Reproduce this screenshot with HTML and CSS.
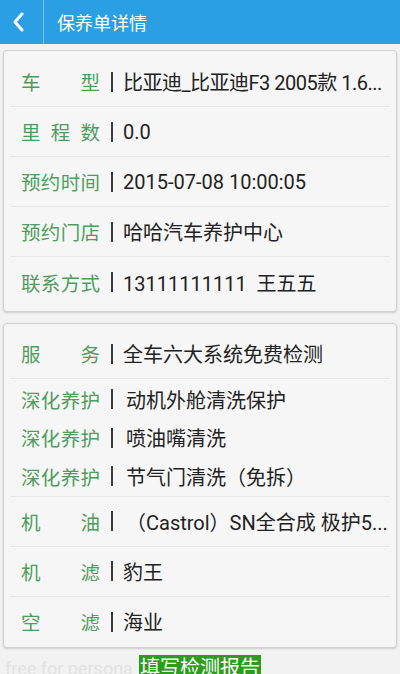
FILE: index.html
```html
<!DOCTYPE html>
<html lang="zh-CN">
<head>
  <meta charset="UTF-8" />
  <meta name="viewport" content="width=device-width, initial-scale=1.0" />
  <title>保养单详情</title>
  <link rel="stylesheet" href="styles.css">
</head>
<body>
  <div class="topbar">
    <div class="back">
      <svg width="14" height="20" viewBox="0 0 14 20"><polyline points="10,2 3,10 10,18" fill="none" stroke="#fff" stroke-width="3" stroke-linecap="round" stroke-linejoin="round"/></svg>
    </div>
    <div class="title">保养单详情</div>
  </div>

  <div class="card card-first">
    <div class="row"><span class="label">车型</span><span class="bar"></span><span class="value tight">比亚迪_比亚迪F3 2005款 1.6...</span></div>
    <div class="row"><span class="label">里程数</span><span class="bar"></span><span class="value">0.0</span></div>
    <div class="row"><span class="label">预约时间</span><span class="bar"></span><span class="value">2015-07-08 10:00:05</span></div>
    <div class="row"><span class="label">预约门店</span><span class="bar"></span><span class="value">哈哈汽车养护中心</span></div>
    <div class="row last"><span class="label">联系方式</span><span class="bar"></span><span class="value">13111111111&nbsp; 王五五</span></div>
  </div>

  <div class="card">
    <div class="row"><span class="label">服务</span><span class="bar"></span><span class="value">全车六大系统免费检测</span></div>
    <div class="group">
      <div class="line"><span class="label">深化养护</span><span class="bar"></span><span class="value indent">动机外舱清洗保护</span></div>
      <div class="line"><span class="label">深化养护</span><span class="bar"></span><span class="value indent">喷油嘴清洗</span></div>
      <div class="line"><span class="label">深化养护</span><span class="bar"></span><span class="value indent">节气门清洗（免拆）</span></div>
    </div>
    <div class="row"><span class="label">机油</span><span class="bar"></span><span class="value indent">（Castrol）SN全合成 极护5...</span></div>
    <div class="row"><span class="label">机滤</span><span class="bar"></span><span class="value">豹王</span></div>
    <div class="row last"><span class="label">空滤</span><span class="bar"></span><span class="value">海业</span></div>
  </div>

  <div class="footer">
    <span class="watermark">free for personal use</span>
    <span class="report-btn">填写检测报告</span>
  </div>
</body>
</html>
```

FILE: styles.css
```css
body { margin: 0; background: #f2f2f2; font-family: Roboto, "Noto Sans CJK SC", sans-serif; color: #222; overflow: hidden; }
.topbar { height: 44px; background: #2a9fe3; display: flex; align-items: center; }
.back { width: 44px; height: 44px; display: flex; align-items: center; justify-content: center; border-right: 1px solid #7cc4ee; box-sizing: border-box; padding-right: 6px; }
.title { color: #fff; font-size: 18px; margin-left: 13px; }
.card { margin: 0 3px; background: #f6f6f6; border: 1px solid #d2d2d2; border-radius: 4px; box-shadow: 0 1px 2px rgba(0,0,0,0.15); padding-top: 5px; }
.card-first { margin-top: 6px; margin-bottom: 11px; padding-top: 6px; padding-bottom: 4px; }
.row, .line { display: flex; align-items: center; font-size: 20px; }
.row { height: 50px; box-sizing: border-box; border-bottom: 1px solid #e6e6e6; margin: 0 6px; padding: 0 0 0 11px; }
.row.last { border-bottom: none; }
.group { border-bottom: 1px solid #e6e6e6; margin: 0 6px; padding-top: 1px; }
.line { height: 38.5px; padding: 0 0 0 11px; }
.label { width: 79px; flex: none; color: #4f9d5c; text-align: justify; text-align-last: justify; font-size: 19.5px; }
.bar { width: 2px; height: 20px; background: #3a3a3a; flex: none; margin: 0 10px 0 11px; }
.value { flex: 1; min-width: 0; white-space: nowrap; overflow: hidden; }
.tight { letter-spacing: -0.5px; }
.indent { padding-left: 3px; }
.footer { position: relative; margin-top: 7px; text-align: center; height: 30px; }
.watermark { position: absolute; left: 5px; top: 3px; width: 128px; overflow: hidden; white-space: nowrap; text-align: left; color: #e2e2e2; font-size: 18px; }
.report-btn { position: relative; display: inline-block; background: #2c9c1d; color: #fff; font-size: 20px; line-height: 26px; padding: 0 1px; }
```
